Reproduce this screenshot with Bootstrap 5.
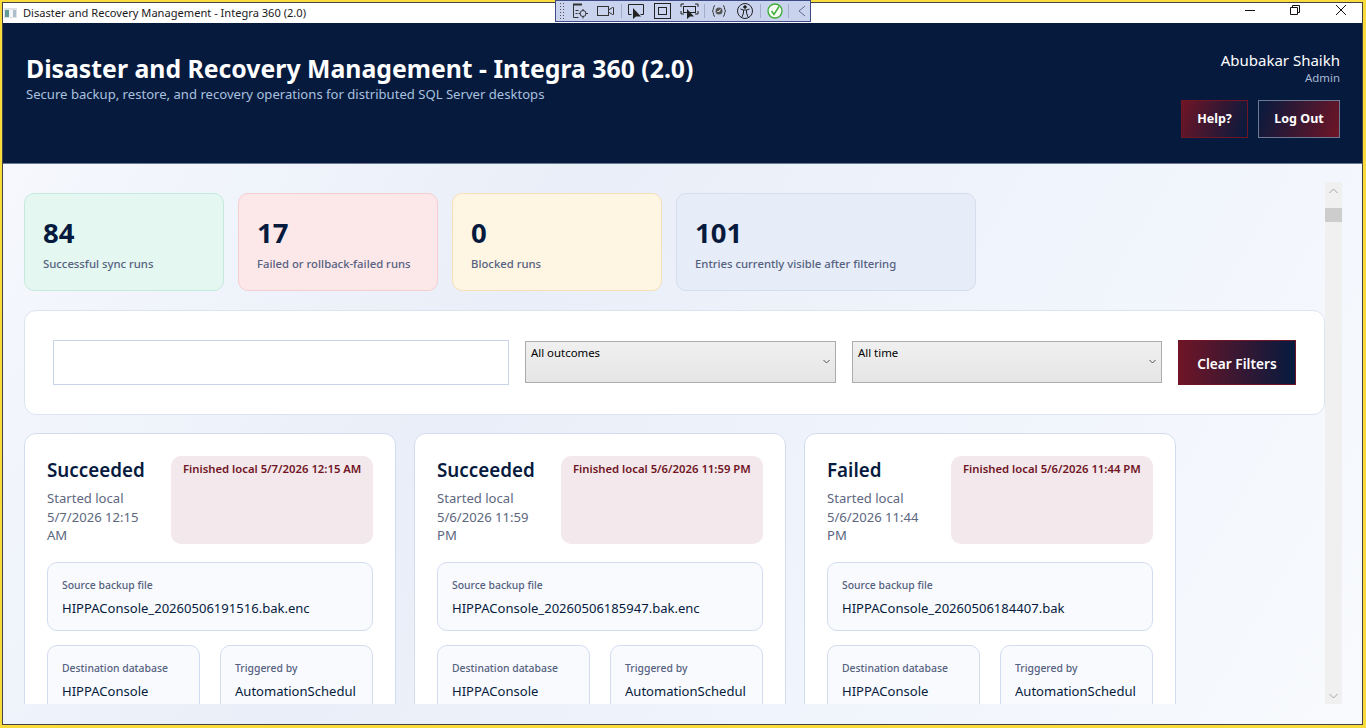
<!DOCTYPE html>
<html lang="en">
<head>
  <meta charset="UTF-8">
  <title>Disaster and Recovery Management - Integra 360 (2.0)</title>
  <link rel="stylesheet" href="https://cdn.jsdelivr.net/npm/bootstrap@5.3.2/dist/css/bootstrap.min.css">
  <style>
    html, body { height: 100%; overflow: hidden; }
    body { font-family: "Noto Sans", "Open Sans", sans-serif; background: #f9dc3c; color: #061a3e; }

    /* window chrome */
    .win-outer { height: 100vh; border: 2px solid #f9dc3c; border-right-width: 3px; border-bottom-width: 3px; }
    .win-frame { height: 100%; border: 1px solid #444; display: flex; flex-direction: column; position: relative; }
    .win-title { height: 20px; flex: none; background: #fff; padding-left: 1px; font-size: 11.1px; color: #1a1a1a; white-space: nowrap; }
    .win-title-text { margin-left: 6px; }
    .win-btns { margin-left: auto; padding-right: 16px; gap: 36px; align-self: flex-start; padding-top: 2px; line-height: 0; }
    .win-btn-min { margin-right: -1px; }
    .dbg-bar { position: absolute; left: 552px; top: -3px; width: 256px; height: 22px; background: #c9d3ee; border: 1px solid #3d4a86; }
    .dbg-grip { width: 6px; height: 18px; margin-left: 3px; background-image: radial-gradient(#555 0.6px, transparent 0.8px); background-size: 3px 3px; }
    .dbg-sep { width: 1px; height: 14px; background: #a3acca; }
    .tb-5 { margin-left: 5px; }
    .tb-6 { margin-left: 6px; }
    .tb-7 { margin-left: 7px; }
    .tb-8 { margin-left: 8px; }
    .tb-9 { margin-left: 9px; }
    .tb-11 { margin-left: 11px; }

    /* header */
    .app-head { height: 141px; flex: none; background: #061a3e; padding: 28px 22px 0 23px; color: #fff; border-bottom: 1px solid #6b7993; }
    .app-title { font-size: 24.8px; font-weight: 700; line-height: 34px; margin: 0; }
    .app-sub { font-size: 13.1px; color: #a9c0de; line-height: 18px; }
    .user-name { font-size: 15px; line-height: 20px; margin-top: -1px; }
    .user-role { font-size: 11.4px; color: #a9b9d2; line-height: 16px; margin-bottom: 14px; }
    .head-actions { gap: 10px; }
    .head-btn { height: 38px; font-size: 12.5px; font-weight: 700; color: #fff; display: flex; align-items: center; justify-content: center; border-radius: 0; padding: 1px 0 0; }
    .head-btn:hover { color: #fff; }
    .btn-help { width: 67px; background: linear-gradient(110deg, #6f1526, #061a3e); border: 1px solid #6f1526; }
    .btn-logout { width: 82px; background: linear-gradient(110deg, #061a3e, #6f1526); border: 1px solid #6b7993; }

    /* body */
    .app-main { flex: 1; min-height: 0; padding: 18px 20px 20px 21px; background: linear-gradient(120deg, #f6f8fd 0%, #e9eef8 35%, #f0f4fc 65%, #f8fafd 100%); display: flex; }
    .scroll-view { flex: 1; min-width: 0; overflow: hidden; padding-top: 11px; }
    .fake-scroll { width: 17px; flex: none; background: #f0f0f0; display: flex; flex-direction: column; align-items: center; }
    .fake-arrow { height: 17px; line-height: 0; display: flex; align-items: center; }
    .fake-thumb { width: 17px; height: 14px; background: #cdcdcd; margin-top: 9px; }

    .stat-row { gap: 14px; }
    .stat-box { height: 98px; border: 1px solid; border-radius: 10px; padding: 20px 18px 0; }
    .stat-w1 { width: 200px; }
    .stat-w2 { width: 210px; }
    .stat-w3 { width: 300px; }
    .stat-ok { background: #e4f7f0; border-color: #c5e9dd; }
    .stat-bad { background: #fde8e9; border-color: #f6cdd0; }
    .stat-warn { background: #fef5e3; border-color: #f6e0b8; }
    .stat-info { background: #e7edf8; border-color: #d5deee; }
    .stat-num { font-size: 27.5px; font-weight: 700; line-height: 38px; color: #061a3e; }
    .stat-lbl { font-size: 11.3px; font-weight: 500; color: #55617f; margin-top: 4px; line-height: 16px; white-space: nowrap; }

    .filter-panel { margin-top: 19px; height: 105px; background: #fff; border: 1px solid #dde4f1; border-radius: 12px; padding: 0 28px; display: flex; align-items: center; gap: 16px; }
    .filter-input { width: 456px; height: 45px; border: 1px solid #c8d4e9; border-radius: 0; }
    .filter-select { height: 42px; margin-bottom: 2px; border: 1px solid #acacac; background: linear-gradient(#f0f0f0, #e5e5e5); font-size: 11.4px; color: #000; padding: 2px 5px; position: relative; }
    .sel-a { width: 311px; }
    .sel-b { width: 310px; }
    .sel-caret { position: absolute; right: 5px; top: 17px; line-height: 0; }
    .btn-clear { width: 118px; height: 45px; border-radius: 0; border: 1px solid #6f1526; background: linear-gradient(90deg, #6f1526, #061a3e); color: #fff; font-size: 13.7px; font-weight: 600; padding: 3px 0 0; }
    .btn-clear:hover { color: #fff; }

    .run-list { margin-top: 18px; gap: 18px; }
    .run-card { width: 372px; flex: none; background: #fff; border: 1px solid #d3dcee; border-radius: 12px; padding: 22px; height: 400px; }
    .run-title { font-size: 18.8px; font-weight: 600; line-height: 28px; color: #061a3e; }
    .run-started { width: 105px; font-size: 13.1px; line-height: 18.5px; color: #5d6780; margin-top: 5px; }
    .run-finished { width: 202px; height: 88px; border-radius: 10px; background: #f3e8eb; color: #6f1526; font-size: 11.3px; font-weight: 600; padding: 5px 0 0 12px; white-space: nowrap; }
    .info-box { background: #f8fafd; border: 1px solid #d3dcee; border-radius: 10px; padding: 14px; height: 69px; }
    .info-wide { margin-top: 17px; }
    .info-key { font-size: 10.4px; font-weight: 500; color: #55617f; line-height: 16px; }
    .info-val { font-size: 13.05px; color: #061a3e; line-height: 20px; margin-top: 5px; white-space: nowrap; overflow: hidden; }
    .info-half { width: 153px; flex: none; }
    .gap-row { gap: 20px; margin-top: 14px; }
  </style>
</head>
<body>

<div class="win-outer">
<div class="win-frame">
  <!-- title bar -->
  <div class="win-title d-flex align-items-center">
    <svg width="13" height="10" viewBox="0 0 13 10"><rect width="13" height="10" fill="#dfe3e6"/><rect x="1" y="2" width="4" height="7" fill="#5f9c98"/><rect x="5" y="2" width="4" height="7" fill="#f4f6f7"/><rect x="9" y="2" width="3" height="7" fill="#aebdcb"/></svg>
    <span class="win-title-text">Disaster and Recovery Management - Integra 360 (2.0)</span>
    <div class="win-btns d-flex">
      <svg class="win-btn-min" width="10" height="10" viewBox="0 0 10 10"><path d="M0 5.500h10" stroke="#111" fill="none"/></svg>
      <svg width="10" height="10" viewBox="0 0 10 10"><path d="M.5 2.500h7v7h-7zM2.500 2.500v-2h7v7h-2" stroke="#111" fill="none"/></svg>
      <svg width="10" height="10" viewBox="0 0 10 10"><path d="M0 0l10 10M10 0L0 10" stroke="#111" fill="none"/></svg>
    </div>
  </div>

  <!-- debug toolbar floating over the title bar -->
  <div class="dbg-bar d-flex align-items-center">
    <div class="dbg-grip"></div>
    <svg class="tb-7" width="16" height="16" viewBox="0 0 16 16" fill="none" stroke="#333"><path d="M1 1.500h9" stroke-width="2"/><path d="M1.500 2v12.500h5M3.500 7.500h3M3.500 10.500h2"/><circle cx="11" cy="10.500" r="3"/><path d="M11 6v2M11 13v2.500M6.500 10.500h2M13.500 10.500h2.500"/></svg>
    <svg class="tb-9" width="18" height="12" viewBox="0 0 18 12" fill="none" stroke="#333"><rect x=".5" y="1.500" width="11" height="9"/><path d="M11.500 5l4-2.500h1v7h-1l-4-2.500"/></svg>
    <div class="dbg-sep tb-6"></div>
    <svg class="tb-6" width="17" height="17" viewBox="0 0 17 17" fill="none"><path d="M3.500 11.500h-3v-10h15v10h-3" stroke="#222"/><path d="M5 5v11l3-2.500h5z" fill="#222"/></svg>
    <svg class="tb-9" width="17" height="16" viewBox="0 0 17 16" fill="none" stroke="#222"><rect x=".5" y=".5" width="16" height="15"/><rect x="4.500" y="4.500" width="8" height="7"/></svg>
    <svg class="tb-9" width="19" height="17" viewBox="0 0 19 17" fill="none"><path d="M1 4V1h3M15 1h3v3M1 8v3h3M15 11h3V8" stroke="#222"/><rect x="3.500" y="3.500" width="12" height="6" stroke="#222"/><path d="M7 6v10l3-2.500h4z" fill="#222"/></svg>
    <div class="dbg-sep tb-5"></div>
    <svg class="tb-7" width="14" height="14" viewBox="0 0 14 14" fill="none" stroke="#333"><path d="M3 1.500c-2 0-1 4-2.500 5.500C2 8.500 1 12.500 3 12.500M11 1.500c2 0 1 4 2.500 5.500-1.500 1.500-.5 5.500-2.500 5.500"/><circle cx="7" cy="7" r="3.500" fill="#555" stroke="none"/><path d="M5.500 7l1 1 2-2.500" stroke="#fff"/></svg>
    <svg class="tb-11" width="16" height="16" viewBox="0 0 16 16" fill="none" stroke="#222"><circle cx="8" cy="8" r="7.500"/><circle cx="8" cy="4" r="1.300" fill="#222"/><path d="M3.500 6l3 1v3l-1.500 4M12.500 6l-3 1v3l1.500 4M6.500 7h3"/></svg>
    <div class="dbg-sep tb-7"></div>
    <svg class="tb-6" width="16" height="16" viewBox="0 0 16 16" fill="none"><circle cx="8" cy="8" r="7" fill="#f6fbf4" stroke="#3fae3a" stroke-width="1.400"/><path d="M4.500 8l2.500 3.500 5-8" stroke="#3fae3a" stroke-width="1.500"/></svg>
    <div class="dbg-sep tb-5"></div>
    <svg class="tb-8" width="9" height="12" viewBox="0 0 9 12" fill="none"><path d="M8 1L2 6l6 5" stroke="#5f6b94"/></svg>
  </div>

  <!-- header -->
  <header class="app-head d-flex justify-content-between">
    <div>
      <h1 class="app-title">Disaster and Recovery Management - Integra 360 (2.0)</h1>
      <div class="app-sub">Secure backup, restore, and recovery operations for distributed SQL Server desktops</div>
    </div>
    <div class="text-end">
      <div class="user-name">Abubakar Shaikh</div>
      <div class="user-role">Admin</div>
      <div class="d-flex head-actions justify-content-end">
        <a href="#" class="btn head-btn btn-help">Help?</a>
        <a href="#" class="btn head-btn btn-logout">Log Out</a>
      </div>
    </div>
  </header>

  <!-- content -->
  <main class="app-main">
    <div class="scroll-view">
      <div class="d-flex stat-row">
        <div class="stat-box stat-w1 stat-ok"><div class="stat-num">84</div><div class="stat-lbl">Successful sync runs</div></div>
        <div class="stat-box stat-w1 stat-bad"><div class="stat-num">17</div><div class="stat-lbl">Failed or rollback-failed runs</div></div>
        <div class="stat-box stat-w2 stat-warn"><div class="stat-num">0</div><div class="stat-lbl">Blocked runs</div></div>
        <div class="stat-box stat-w3 stat-info"><div class="stat-num">101</div><div class="stat-lbl">Entries currently visible after filtering</div></div>
      </div>

      <div class="filter-panel">
        <input type="text" class="filter-input" aria-label="Search">
        <div class="filter-select sel-a">All outcomes<span class="sel-caret"><svg width="7" height="5" viewBox="0 0 7 5" fill="none"><path d="M.5 1l3 3 3-3" stroke="#555"/></svg></span></div>
        <div class="filter-select sel-b">All time<span class="sel-caret"><svg width="7" height="5" viewBox="0 0 7 5" fill="none"><path d="M.5 1l3 3 3-3" stroke="#555"/></svg></span></div>
        <button type="button" class="btn btn-clear">Clear Filters</button>
      </div>

      <div class="d-flex run-list">
        <div class="run-card">
          <div class="d-flex justify-content-between">
            <div><div class="run-title">Succeeded</div><div class="run-started">Started local 5/7/2026 12:15 AM</div></div>
            <div class="run-finished">Finished local 5/7/2026 12:15 AM</div>
          </div>
          <div class="info-box info-wide"><div class="info-key">Source backup file</div><div class="info-val">HIPPAConsole_20260506191516.bak.enc</div></div>
          <div class="d-flex gap-row">
            <div class="info-box info-half"><div class="info-key">Destination database</div><div class="info-val">HIPPAConsole</div></div>
            <div class="info-box info-half"><div class="info-key">Triggered by</div><div class="info-val">AutomationSchedul</div></div>
          </div>
        </div>
        <div class="run-card">
          <div class="d-flex justify-content-between">
            <div><div class="run-title">Succeeded</div><div class="run-started">Started local 5/6/2026 11:59 PM</div></div>
            <div class="run-finished">Finished local 5/6/2026 11:59 PM</div>
          </div>
          <div class="info-box info-wide"><div class="info-key">Source backup file</div><div class="info-val">HIPPAConsole_20260506185947.bak.enc</div></div>
          <div class="d-flex gap-row">
            <div class="info-box info-half"><div class="info-key">Destination database</div><div class="info-val">HIPPAConsole</div></div>
            <div class="info-box info-half"><div class="info-key">Triggered by</div><div class="info-val">AutomationSchedul</div></div>
          </div>
        </div>
        <div class="run-card">
          <div class="d-flex justify-content-between">
            <div><div class="run-title">Failed</div><div class="run-started">Started local 5/6/2026 11:44 PM</div></div>
            <div class="run-finished">Finished local 5/6/2026 11:44 PM</div>
          </div>
          <div class="info-box info-wide"><div class="info-key">Source backup file</div><div class="info-val">HIPPAConsole_20260506184407.bak</div></div>
          <div class="d-flex gap-row">
            <div class="info-box info-half"><div class="info-key">Destination database</div><div class="info-val">HIPPAConsole</div></div>
            <div class="info-box info-half"><div class="info-key">Triggered by</div><div class="info-val">AutomationSchedul</div></div>
          </div>
        </div>
      </div>
    </div>

    <!-- scrollbar -->
    <div class="fake-scroll">
      <div class="fake-arrow"><svg width="9" height="6" viewBox="0 0 9 6" fill="none"><path d="M.5 5l4-4 4 4" stroke="#a3a3a3"/></svg></div>
      <div class="fake-thumb"></div>
      <div class="fake-arrow mt-auto"><svg width="9" height="6" viewBox="0 0 9 6" fill="none"><path d="M.5 1l4 4 4-4" stroke="#a3a3a3"/></svg></div>
    </div>
  </main>
</div>
</div>

</body>
</html>
